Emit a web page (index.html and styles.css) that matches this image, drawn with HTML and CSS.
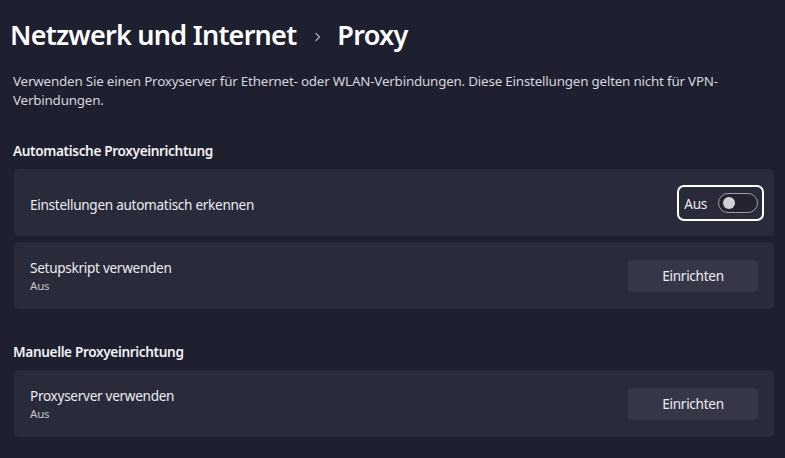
FILE: index.html
```html
<!DOCTYPE html>
<html lang="de">
<head>
<meta charset="utf-8">
<title>Proxy</title>
<link rel="stylesheet" href="styles.css">
</head>
<body>
<main class="page">
  <h1 class="title">
    <span class="crumb">Netzwerk und Internet</span>
    <svg class="chev" width="8" height="10" viewBox="0 0 8 10"><path d="M2 1.5 L5.5 5 L2 8.5" fill="none" stroke="#a9aab3" stroke-width="1.4" stroke-linecap="round" stroke-linejoin="round"/></svg>
    <span class="crumb">Proxy</span>
  </h1>
  <p class="desc">Verwenden Sie einen Proxyserver für Ethernet- oder WLAN-Verbindungen. Diese Einstellungen gelten nicht für VPN-Verbindungen.</p>

  <section class="group">
    <h2 class="group-title">Automatische Proxyeinrichtung</h2>
    <div class="card">
      <div class="card-text single">
        <div class="label">Einstellungen automatisch erkennen</div>
      </div>
      <div class="toggle-wrap">
        <span class="toggle-label">Aus</span>
        <span class="toggle"><span class="thumb"></span></span>
      </div>
    </div>
    <div class="card">
      <div class="card-text">
        <div class="label">Setupskript verwenden</div>
        <div class="sub">Aus</div>
      </div>
      <button class="btn">Einrichten</button>
    </div>
  </section>

  <section class="group group-2">
    <h2 class="group-title">Manuelle Proxyeinrichtung</h2>
    <div class="card">
      <div class="card-text">
        <div class="label">Proxyserver verwenden</div>
        <div class="sub">Aus</div>
      </div>
      <button class="btn">Einrichten</button>
    </div>
  </section>
</main>
</body>
</html>
```

FILE: styles.css
```css
html, body {
  margin: 0;
  padding: 0;
  background: #1e1f2f;
  color: #ffffff;
  font-family: "Noto Sans", "Open Sans", sans-serif;
  overflow: hidden;
}

.page {
  padding: 13px 11px 0 13px;
}

.title {
  display: flex;
  align-items: center;
  margin: 0 0 0 -3px;
  font-size: 27px;
  font-weight: 600;
  line-height: 44px;
  height: 44px;
  letter-spacing: -0.75px;
}

.chev {
  margin: 4px 15px 0 18px;
}

.desc {
  margin: 15px 0 0 0;
  font-size: 13.4px;
  line-height: 19px;
  color: #d6d6dc;
  letter-spacing: -0.2px;
  max-width: 750px;
}

.group {
  margin-top: 31px;
}

.group-2 {
  margin-top: 33px;
}

.group-title {
  margin: 0 0 8px 0;
  font-size: 13.6px;
  font-weight: 600;
  line-height: 20px;
  color: #f2f2f4;
  letter-spacing: -0.35px;
}

.card {
  display: flex;
  align-items: center;
  justify-content: space-between;
  box-sizing: border-box;
  height: 67px;
  margin: 0 0 6px 1px;
  padding: 0 16px;
  background: #292a3a;
  border-radius: 5px;
}

.card-text {
  display: flex;
  flex-direction: column;
}

.card-text.single {
  padding-top: 3px;
}

.label {
  font-size: 13.6px;
  line-height: 19px;
  color: #ececf0;
  letter-spacing: -0.3px;
}

.sub {
  font-size: 11.5px;
  line-height: 17px;
  color: #c4c4cc;
  letter-spacing: -0.2px;
}

.toggle-wrap {
  display: flex;
  align-items: center;
  gap: 11px;
  box-sizing: border-box;
  height: 36px;
  padding: 1px 4px 0 5px;
  border: 2px solid #ffffff;
  border-radius: 7px;
  margin-right: -6px;
}

.toggle-label {
  font-size: 13.6px;
  color: #ececf0;
  letter-spacing: -0.3px;
}

.toggle {
  position: relative;
  display: block;
  box-sizing: border-box;
  width: 40px;
  height: 20px;
  border: 1px solid #9d9ea8;
  border-radius: 10px;
  background: #23242f;
}

.thumb {
  position: absolute;
  left: 4px;
  top: 3px;
  width: 12px;
  height: 12px;
  border-radius: 50%;
  background: #d0d0d5;
}

.btn {
  width: 130px;
  height: 32px;
  border: none;
  border-radius: 4px;
  background: #363746;
  color: #ececf0;
  font-family: inherit;
  font-size: 13.6px;
  letter-spacing: -0.3px;
}
```
